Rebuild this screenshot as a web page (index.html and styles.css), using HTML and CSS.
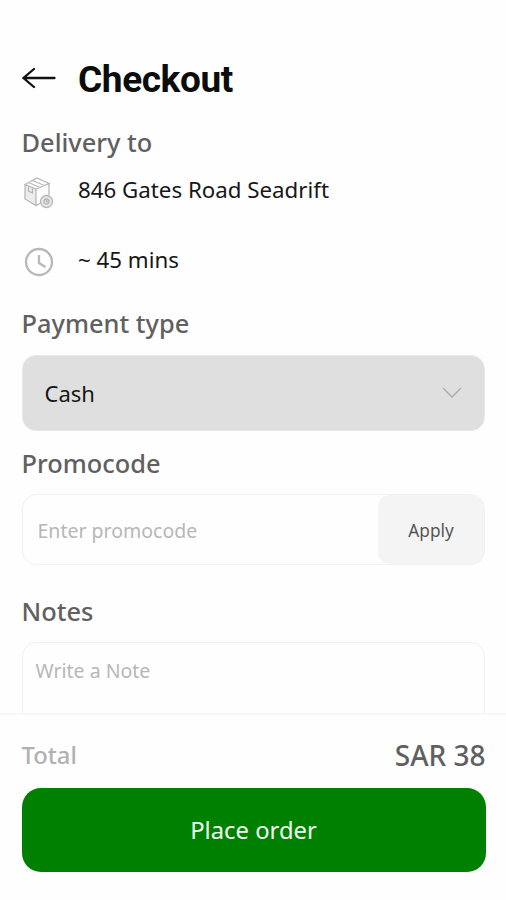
FILE: index.html
```html
<!DOCTYPE html>
<html lang="en">
<head>
<meta charset="utf-8">
<title>Checkout</title>
<link rel="stylesheet" href="styles.css">
</head>
<body>
<div class="screen">
  <main class="content">
    <header class="header">
      <svg class="back" viewBox="0 0 34 22" width="34" height="22"><path d="M32.500 11H1.500M12 2 1.500 11l10.500 9"/></svg>
      <h1 class="title">Checkout</h1>
    </header>
    <h2 class="heading delivery">Delivery to</h2>
    <div class="row address">
      <svg class="icon package" viewBox="0 0 30 32" width="30" height="32">
        <path class="face" d="M1 7.500 12 12v16.500L1 22z"/>
        <path d="M1 7.500 13 1l12 5.500L12 12zM1 7.500V22l11 6.500V12M25 6.500V18M12 28.500l5-2.500M4.500 5.500 16 10.500M8.500 3.500 20.500 8.500M4.500 9.500v4.500l4 2v-4.500"/>
        <circle class="badge" cx="22.500" cy="24.500" r="6"/>
        <circle cx="22.500" cy="24.500" r="2.500"/><path d="M22.500 22.500v2h2"/>
      </svg>
      <span>846 Gates Road Seadrift</span>
    </div>
    <div class="row time">
      <svg class="icon clock" viewBox="0 0 30 30" width="30" height="30"><circle cx="15" cy="15" r="13"/><path d="M15 8v8l6.500 4"/></svg>
      <span>~ 45 mins</span>
    </div>
    <h2 class="heading payment">Payment type</h2>
    <div class="select"><span>Cash</span>
      <svg class="chevron" viewBox="0 0 20 12" width="20" height="12"><path d="m1 1 9 9 9-9"/></svg>
    </div>
    <h2 class="heading promo-heading">Promocode</h2>
    <div class="promo"><span class="placeholder">Enter promocode</span><button class="apply">Apply</button></div>
    <h2 class="heading notes-heading">Notes</h2>
    <div class="notes"><span class="placeholder">Write a Note</span></div>
  </main>
  <footer class="footer">
    <div class="total"><span class="label">Total</span><span class="amount">SAR 38</span></div>
    <button class="order">Place order</button>
  </footer>
</div>
</body>
</html>
```
FILE: styles.css
```css
* { box-sizing: border-box; }
body { margin: 0; background: #fefefe; font-family: "Noto Sans", sans-serif; color: #171717; }
button { border: 0; padding: 0; font-family: inherit; }
svg { fill: none; flex: none; }
.screen { height: 900px; display: flex; flex-direction: column; overflow: hidden; }
.content { height: 713px; flex: none; overflow: hidden; padding: 59px 21px 0 21.5px; }
.header { display: flex; align-items: center; height: 42px; gap: 22.5px; }
.back { stroke: #111; stroke-width: 2.3; stroke-linecap: round; margin-top: -4px; }
.title { margin: 0; font: 700 37px/42px Roboto, sans-serif; color: #0c0c0c; letter-spacing: -0.4px; }
.heading { margin: 0; height: 34px; font-size: 25.4px; line-height: 34px; font-weight: 500; color: #606060; }
.delivery { margin-top: 24px; }
.row { display: flex; align-items: center; gap: 24px; height: 34px; font-size: 22.3px; line-height: 34px; padding-left: 2.5px; }
.address { margin-top: 14px; }
.time { margin-top: 36px; }
.icon { stroke: #b8b8b8; }
.package { stroke-width: 1.3; margin-top: 6px; }
.face { fill: #ececec; stroke: none; }
.badge { fill: #e8e8e8; }
.clock { stroke-width: 2.3; margin-top: 3px; }
.payment { margin-top: 29px; }
.select { display: flex; align-items: center; justify-content: space-between; height: 76px; margin-top: 15px; padding: 0 22px; background: #dfdfdf; border: 1px solid #e8e8e8; border-radius: 14px; font-size: 22px; }
.chevron { stroke: #aaa; stroke-width: 1.3; }
.promo-heading { margin-top: 15px; }
.promo { display: flex; align-items: center; justify-content: space-between; height: 71px; margin-top: 14px; padding-left: 15px; border: 1px solid #f1f1f1; border-radius: 14px; }
.placeholder { font-size: 19.5px; line-height: 28px; color: #b7b7b7; }
.promo .placeholder { padding-top: 2px; }
.apply { width: 106px; height: 69px; padding-top: 1px; border-radius: 12px; background: #f4f4f4; color: #555; font-size: 17.2px; }
.notes-heading { margin-top: 29px; }
.notes { height: 120px; margin-top: 14px; padding: 14px 13px; border: 1px solid #f1f1f1; border-radius: 14px; }
.footer { flex: 1; border-top: 2px solid #f8f8f8; padding: 20px 20.5px 0 21.5px; }
.total { display: flex; justify-content: space-between; align-items: center; height: 40px; }
.label { font-size: 23.8px; font-weight: 500; color: #b1b1b1; }
.amount { font-size: 28px; font-weight: 500; color: #606060; }
.order { width: 100%; height: 84px; margin-top: 13px; padding-bottom: 1px; border-radius: 19px; background: #008000; color: #f2fff2; font-size: 23.8px; }
```
